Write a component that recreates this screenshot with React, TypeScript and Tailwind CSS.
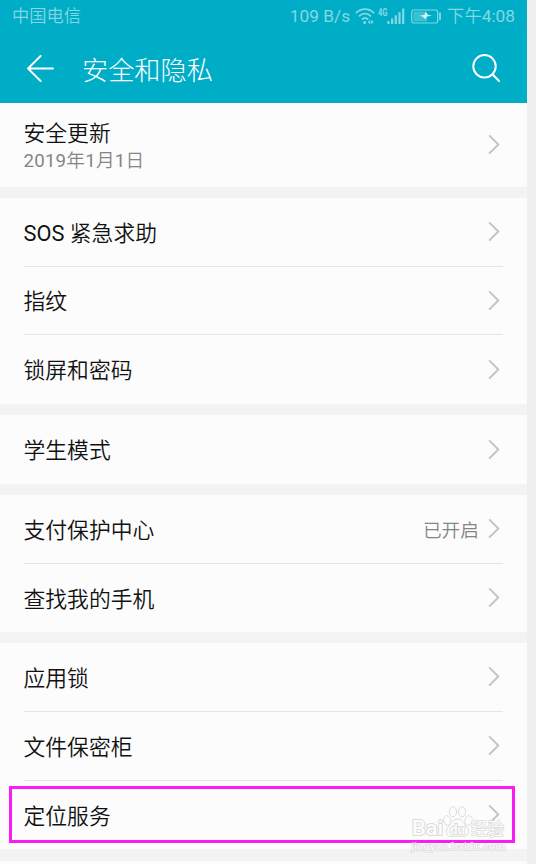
import React from 'react';
import clsx from 'clsx';

type Item = {
  title: string;
  subtitle?: string;
  value?: string;
  size: string;
};

const groups: { gap: string; items: Item[] }[] = [
  { gap: 'mb-[11px]', items: [{ title: '安全更新', subtitle: '2019年1月1日', size: 'h-[84px]' }] },
  {
    gap: 'mb-[11px]',
    items: [
      { title: 'SOS 紧急求助', size: 'h-[69px]' },
      { title: '指纹', size: 'h-[68px]' },
      { title: '锁屏和密码', size: 'h-[69px]' },
    ],
  },
  { gap: 'mb-[11px]', items: [{ title: '学生模式', size: 'h-[69px]' }] },
  {
    gap: 'mb-[11px]',
    items: [
      { title: '支付保护中心', value: '已开启', size: 'h-[69px]' },
      { title: '查找我的手机', size: 'h-[68px]' },
    ],
  },
  {
    gap: 'mb-3',
    items: [
      { title: '应用锁', size: 'h-[69px]' },
      { title: '文件保密柜', size: 'h-[69px]' },
      { title: '定位服务', size: 'h-[68px]' },
    ],
  },
];

function StatusBar() {
  return (
    <div className="flex h-8 items-center justify-between pt-[2px] pl-3 pr-3 text-[17.3px] leading-none text-[#84d7e4]">
      <span>中国电信</span>
      <div className="flex items-center">
        <span className="whitespace-nowrap">109 B/s</span>
        <svg className="ml-[5px] h-5 w-5" viewBox="0 0 20 20" fill="none" stroke="currentColor" strokeWidth="1.8">
          <path d="M1 6.2C6 .8 14 .8 19 6.2" />
          <path d="M4 9.4c3.500-3.600 8.500-3.600 12 0" />
          <path d="M6.800 12.500c2-1.800 4.400-1.800 6.400 0" />
          <circle cx="9.600" cy="15.500" r="1.500" fill="currentColor" stroke="none" />
          <path d="M15.200 12.800v4.400L12.800 15zM16.200 12.800v4.400l2.500-2.200z" fill="currentColor" stroke="none" />
        </svg>
        <svg className="ml-[3px] h-5 w-[28px]" viewBox="0 0 28 20" fill="currentColor">
          <text x="0" y="8.500" fontSize="10" fontWeight="700" textLength="9.500" lengthAdjust="spacingAndGlyphs">4G</text>
          <path d="M9.300 14h2.200v3H9.300zM13 11.500h2.200V17H13zM16.700 8.300h2.200V17h-2.200zM20.400 5.200h2.200V17h-2.200zM24.100 1.500h2.200V17h-2.200z" />
        </svg>
        <svg className="ml-[5px] h-5 w-[31px]" viewBox="0 0 31 20" fill="none" stroke="currentColor">
          <rect x=".8" y="3" width="25.800" height="13" rx="1.800" strokeWidth="1.200" />
          <path d="M2.500 4.600h13.700v9.800H2.500z" fill="currentColor" fillOpacity=".45" stroke="none" />
          <path d="M8 8.800l5.500-.9.800-2.800 3 2.800 3.700.6-5.500 1.200-1 2.900-2.800-3z" fill="#d8f5f8" stroke="none" />
          <path d="M29 5.500v7.700" strokeWidth="1.800" />
        </svg>
        <span className="ml-[5px] whitespace-nowrap">下午4:08</span>
      </div>
    </div>
  );
}

function Header() {
  return (
    <header className="h-[103px] shrink-0 bg-[#00adc6]">
      <StatusBar />
      <div className="flex h-[71px] items-center pl-[26px] pr-[26px] pt-[1px] text-white">
        <svg className="h-7 w-7" viewBox="0 0 28 28" fill="none" stroke="currentColor" strokeWidth="1.9" strokeLinecap="round" strokeLinejoin="round">
          <path d="M27 14.5H2M14.6 2 2 14.5 14.6 27" />
        </svg>
        <h1 className="ml-[28px] flex-1 pt-[2px] font-['Noto_Sans_CJK_SC',sans-serif] text-[26.2px] leading-none font-light">安全和隐私</h1>
        <svg className="h-[30px] w-[30px]" viewBox="0 0 30 30" fill="none" stroke="currentColor" strokeWidth="2" strokeLinecap="round">
          <circle cx="13.500" cy="13.300" r="11.200" />
          <path d="M21.500 21.300 28 28" />
        </svg>
      </div>
    </header>
  );
}

function Chevron() {
  return (
    <svg className="h-5 w-3" viewBox="0 0 12 20" fill="none" stroke="#c4c4c4" strokeWidth="1.9" strokeLinecap="round" strokeLinejoin="round">
      <path d="M1.700 1.900 10.300 10.500 1.700 19" />
    </svg>
  );
}

function Row({ item, last }: { item: Item; last: boolean }) {
  return (
    <div className={clsx('mx-6 flex items-center', item.size, !last && 'border-b border-[#e5e5e5]')}>
      <div className="-ml-[.5px] flex-1 pt-[3px]">
        <div className={clsx('text-[21.8px] text-[#111]', item.subtitle ? 'leading-[28px]' : 'leading-none')}>{item.title}</div>
        {item.subtitle && <div className="text-[18.7px] leading-[26px] tracking-[.2px] text-[#858585]">{item.subtitle}</div>}
      </div>
      {item.value && <span className="mr-[9px] pt-1 text-[18.7px] leading-none text-[#858585]">{item.value}</span>}
      <div className="mr-[3px] -mt-[2px]">
        <Chevron />
      </div>
    </div>
  );
}

function Watermark() {
  return (
    <svg className="absolute top-[800px] left-[408px] h-[56px] w-[102px]" viewBox="0 0 102 56" fill="#fcfcfc" stroke="#dcdcdc" strokeWidth="1">
      <g paintOrder="stroke" strokeWidth="2" strokeLinejoin="round">
        <text x="4" y="35" fontSize="19.500" fontWeight="500" textLength="31" lengthAdjust="spacingAndGlyphs">Bai</text>
        <text x="63" y="34.500" fontSize="16.500" fontWeight="500" strokeWidth="1.600">经验</text>
      </g>
      <ellipse cx="39.300" cy="20.500" rx="3.600" ry="4.800" transform="rotate(-15 39.300 20.500)" />
      <ellipse cx="45" cy="11.800" rx="3.600" ry="5" />
      <ellipse cx="54" cy="11.800" rx="3.600" ry="5" />
      <ellipse cx="60.500" cy="20.500" rx="3.600" ry="4.800" transform="rotate(15 60.500 20.500)" />
      <path d="M49.500 19c4.500 0 6 4 9 7.500 4 4.500 2 10.500-3.500 10-4-.5-7-.5-11 0-6 .5-7.500-5.500-3.500-10 3-3.500 4.500-7.500 9-7.500z" />
      <text x="42" y="34" fontSize="13.500" fontWeight="500" paintOrder="stroke" strokeWidth="2" textLength="15" lengthAdjust="spacingAndGlyphs">du</text>
      <text x="3.500" y="50" fontSize="9.500" paintOrder="stroke" strokeWidth="1.400" textLength="94" lengthAdjust="spacingAndGlyphs">jingyan.baidu.com</text>
    </svg>
  );
}

export default function App() {
  return (
    <div className="relative h-[864px] w-[536px] overflow-hidden bg-[#efefef] font-[Roboto,'Noto_Sans_CJK_SC_DemiLight','Noto_Sans_CJK_SC',sans-serif]">
      <div className="flex h-full w-[527px] flex-col overflow-hidden bg-[#f3f3f3]">
        <Header />
        <main>
          {groups.map((group) => (
            <section key={group.items[0].title} className={clsx('bg-[#fcfcfc]', group.gap)}>
              {group.items.map((item, i) => (
                <Row key={item.title} item={item} last={i === group.items.length - 1} />
              ))}
            </section>
          ))}
          <section className="h-4 bg-[#fcfcfc]" />
        </main>
      </div>

      {/* Highlight around the location services row */}
      <div className="absolute top-[786px] left-[9px] h-[57px] w-[506px] border-[3px] border-[#fb1cf5]" />
      <Watermark />
    </div>
  );
}
